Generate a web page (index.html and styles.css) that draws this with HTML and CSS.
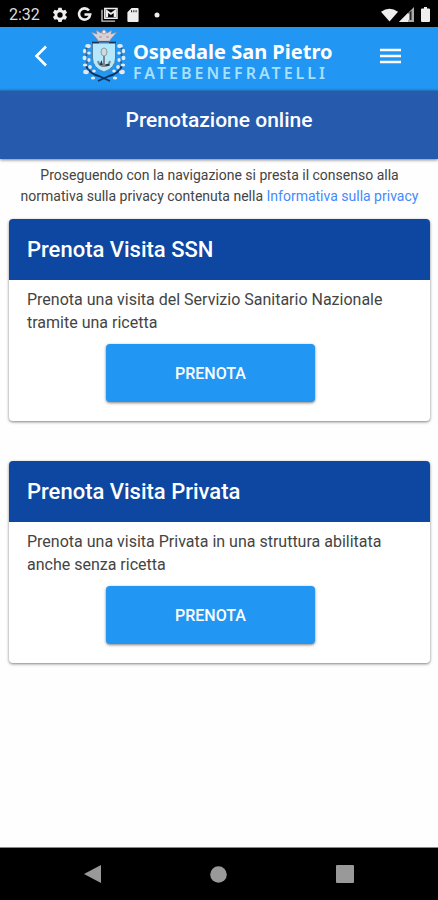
FILE: index.html
```html
<!DOCTYPE html>
<html lang="it">
<head>
    <meta charset="UTF-8">
    <meta name="viewport" content="width=device-width, initial-scale=1.0">
    <title>Prenotazione online</title>
    <link rel="stylesheet" href="styles.css">
</head>
<body>
    <div class="status-bar">
        <span class="time">2:32</span>
        <div class="status-icons">
            <!-- settings -->
            <svg width="16" height="16" viewBox="0 0 24 24"><path fill="#eee" fill-rule="evenodd" d="M9.5 1h5l.6 3.2 2 1.1 3-1.1 2.5 4.300-2.500 2.100v2.300l2.500 2.100-2.500 4.300-3-1.100-2 1.200-.6 3.200h-5l-.6-3.200-2-1.200-3 1.100-2.500-4.300 2.500-2.100v-2.300L1.400 8.500l2.500-4.300 3 1.100 2-1.100zM12 8a4 4 0 1 0 0 8 4 4 0 0 0 0-8z"/></svg>
            <!-- google -->
            <svg width="15" height="15" viewBox="0 0 15 15"><path fill="none" stroke="#eee" stroke-width="2.600" d="M12 3.500A5.600 5.600 0 1 0 13.200 7.500H7.500"/></svg>
            <!-- gallery with mail -->
            <svg width="17" height="15" viewBox="0 0 18 16"><path fill="none" stroke="#ccc" stroke-width="1.400" d="M1 3v12h14"/><path fill="none" stroke="#eee" stroke-width="1.600" d="M4 1.500h13v10.500H4z"/><path fill="#eee" d="M5 11V2l5.500 4L16 2v9h-2.500V6.500l-3 2-3-2V11z"/></svg>
            <!-- sd card -->
            <svg width="12" height="14" viewBox="0 0 12 15"><path fill="#eee" fill-rule="evenodd" d="M4.500 0H11a1 1 0 0 1 1 1v13a1 1 0 0 1-1 1H1a1 1 0 0 1-1-1V4.500zM4 2.500v2h1v-2zm2.400 0v2h1v-2zm2.400 0v2h1v-2z"/></svg>
            <svg class="dot" width="6" height="6" viewBox="0 0 6 6"><circle cx="3" cy="3" r="2.500" fill="#eee"/></svg>
        </div>
        <div class="signal-icons">
            <svg width="17" height="14" viewBox="0 0 18 14"><path fill="#eee" d="M0 3.500Q9-3 18 3.500L9 14z"/></svg>
            <svg width="15" height="15" viewBox="0 0 15 15"><path fill="#aaa" d="M0 15 15 0v15z"/><path fill="#eee" d="M0 15 9 6v9z"/><path fill="#222" d="M9 7l3.500-3.500V13H9z"/><path fill="#eee" d="M9 7l1.500-1v7H9z"/></svg>
            <svg class="battery" width="9" height="15" viewBox="0 0 9 15"><path fill="#eee" d="M3 0h3v1.500h2a1 1 0 0 1 1 1V14a1 1 0 0 1-1 1H1a1 1 0 0 1-1-1V2.500a1 1 0 0 1 1-1h2z"/></svg>
        </div>
    </div>

    <header class="navbar">
        <button class="icon-btn" aria-label="Indietro">
            <svg width="14" height="22" viewBox="0 0 14 22"><path fill="none" stroke="#fff" stroke-width="2.600" d="M12 1.500 2.500 11l9.500 9.500"/></svg>
        </button>
        <div class="brand">
            <svg width="44" height="56" viewBox="0 0 44 56">
                <!-- olive branches -->
                <g fill="none" stroke="#4c7fae" stroke-width="1">
                    <path d="M6 18Q2 28 6 40"/>
                    <path d="M38 18q4 10 0 22"/>
                </g>
                <g fill="none" stroke="#12305c" stroke-width="1.800">
                    <path d="M4 38q4 8 13 10l11 5"/>
                    <path d="M40 38q-4 8-13 10l-11 5"/>
                </g>
                <g fill="#dfeaf2">
                    <ellipse cx="6" cy="18" rx="2.800" ry="2"/><ellipse cx="2.500" cy="23" rx="1.600" ry="2.200"/><ellipse cx="7" cy="25" rx="1.800" ry="1.500"/>
                    <ellipse cx="2.500" cy="30" rx="2" ry="2.200"/><ellipse cx="7" cy="32" rx="1.600" ry="2"/><ellipse cx="3" cy="37" rx="2.200" ry="1.600"/>
                    <ellipse cx="8" cy="39" rx="1.800" ry="2"/><ellipse cx="4" cy="44" rx="2.800" ry="2.200"/><ellipse cx="12" cy="43" rx="1.800" ry="1.600"/><ellipse cx="11" cy="50" rx="2.200" ry="1.600"/>
                    <ellipse cx="38" cy="18" rx="2.800" ry="2"/><ellipse cx="41.500" cy="23" rx="1.600" ry="2.200"/><ellipse cx="37" cy="25" rx="1.800" ry="1.500"/>
                    <ellipse cx="41.500" cy="30" rx="2" ry="2.200"/><ellipse cx="37" cy="32" rx="1.600" ry="2"/><ellipse cx="41" cy="37" rx="2.200" ry="1.600"/>
                    <ellipse cx="36" cy="39" rx="1.800" ry="2"/><ellipse cx="40" cy="44" rx="2.800" ry="2.200"/><ellipse cx="32" cy="43" rx="1.800" ry="1.600"/><ellipse cx="33" cy="50" rx="2.200" ry="1.600"/>
                </g>
                <g fill="#3c5672">
                    <circle cx="4.500" cy="20.500" r="1"/><circle cx="4.500" cy="27" r="1"/><circle cx="5" cy="34.500" r="1"/><circle cx="6" cy="41.500" r="1"/>
                    <circle cx="39.500" cy="20.500" r="1"/><circle cx="39.500" cy="27" r="1"/><circle cx="39" cy="34.500" r="1"/><circle cx="38" cy="41.500" r="1"/>
                </g>
                <!-- shield with the anchor -->
                <path fill="#b5e8fa" stroke="#4f7da3" d="M10.500 15h23v15q0 10-11.500 14-11.500-4-11.500-14z"/>
                <path stroke="#1c3252" stroke-width="1.300" d="M10 14.500h7m10 0h7"/>
                <ellipse cx="22" cy="24" rx="3" ry="4" fill="#d3dade" stroke="#8b9ca8"/>
                <path fill="none" stroke="#7c868d" stroke-width="2" d="M22 28v9M16 33q1 5 6 5 5 0 6-5"/>
                <path fill="#303b46" d="m17.500 37 2-5 1.500 5zm6-1h4v2h-4z"/>
                <!-- crown -->
                <path fill="#d6d2d8" stroke="#7d8194" stroke-width=".6" d="m15 11-6-7 6 2-1-4 5 3 3-4 3 4 5-3-1 4 6-2-6 7-2 3H17z"/>
                <path stroke="#5b5561" stroke-width="1.200" d="M16.500 13.500h11"/>
                <path fill="none" stroke="#b98790" d="M17 9h3m4 0h3"/>
                <circle cx="22" cy="4" r="2" fill="#f2e8e8" stroke="#8d717b" stroke-width=".6"/>
            </svg>
            <div class="brand-text">
                <span class="brand-name">Ospedale San Pietro</span>
                <span class="brand-sub">FATEBENEFRATELLI</span>
            </div>
        </div>
        <button class="icon-btn" aria-label="Menu">
            <svg width="21" height="16" viewBox="0 0 21 16"><path stroke="#fff" stroke-width="2.600" d="M0 2h21M0 8h21M0 14h21"/></svg>
        </button>
    </header>

    <h1 class="page-title">Prenotazione online</h1>

    <main class="content">
        <p class="privacy">Proseguendo con la navigazione si presta il consenso alla normativa sulla privacy contenuta nella <a href="#">Informativa sulla privacy</a></p>

        <section class="card">
            <h2 class="card-title">Prenota Visita SSN</h2>
            <div class="card-body">
                <p>Prenota una visita del Servizio Sanitario Nazionale tramite una ricetta</p>
                <button class="book-btn">PRENOTA</button>
            </div>
        </section>

        <section class="card">
            <h2 class="card-title">Prenota Visita Privata</h2>
            <div class="card-body">
                <p>Prenota una visita Privata in una struttura abilitata anche senza ricetta</p>
                <button class="book-btn">PRENOTA</button>
            </div>
        </section>
    </main>

    <nav class="system-nav">
        <button class="icon-btn" aria-label="Back"><svg width="17" height="18" viewBox="0 0 17 18"><path fill="#999" d="M17 0v18L0 9z"/></svg></button>
        <button class="icon-btn" aria-label="Home"><svg width="17" height="17" viewBox="0 0 17 17"><circle cx="8.500" cy="8.500" r="8.300" fill="#999"/></svg></button>
        <button class="icon-btn" aria-label="Recent apps"><svg width="18" height="18" viewBox="0 0 18 18"><rect width="18" height="18" rx="1" fill="#999"/></svg></button>
    </nav>
</body>
</html>
```
FILE: styles.css
```css
* {
    box-sizing: border-box;
}
body {
    margin: 0;
    min-height: 100vh;
    display: flex;
    flex-direction: column;
    background: #fefefe;
    font-family: Roboto, sans-serif;
    color: #444;
}
button {
    border: none;
    font-family: inherit;
    cursor: pointer;
}
svg {
    display: block;
    flex-shrink: 0;
}
.status-bar {
    display: flex;
    align-items: center;
    height: 27px;
    padding: 2px 8px 0 9px;
    background: #000;
    color: #ddd;
}
.time {
    font-size: 16px;
}
.status-icons {
    display: flex;
    align-items: center;
    gap: 9px;
    margin-left: 12px;
}
.dot {
    margin-left: 6px;
}
.signal-icons {
    display: flex;
    align-items: center;
    gap: 1px;
    margin-left: auto;
}
.battery {
    margin-left: 6px;
}
.navbar {
    display: flex;
    align-items: center;
    height: 63px;
    padding: 0 29px 6px 26px;
    background: #2196f3;
}
.icon-btn {
    display: flex;
    justify-content: center;
    padding: 8px;
    background: none;
}
.brand {
    display: flex;
    align-items: center;
    gap: 7px;
    margin: 0 auto 0 26px;
}
.brand-text {
    display: flex;
    flex-direction: column;
    padding-top: 12px;
}
.brand-name {
    font-family: "Noto Sans", sans-serif;
    font-size: 20px;
    font-weight: 700;
    line-height: 23px;
    color: #fff;
}
.brand-sub {
    font-family: "Noto Sans", sans-serif;
    font-size: 16px;
    font-weight: 600;
    line-height: 20px;
    letter-spacing: 3px;
    color: #a6e0ff;
}
.page-title {
    margin: 0;
    height: 69px;
    padding-top: 16px;
    border-top: 1px solid #2373bd;
    background: #255aac;
    box-shadow: 0 1px 3px rgba(0, 0, 0, 0.5);
    font-size: 21px;
    font-weight: 500;
    line-height: 26px;
    text-align: center;
    color: #fff;
}
.content {
    flex: 1;
    padding: 6px 8px 0 9px;
}
.privacy {
    margin: 0 0 12px;
    font-size: 14px;
    line-height: 21px;
    text-align: center;
}
.privacy a {
    color: #448aff;
    text-decoration: none;
}
.card {
    margin-bottom: 40px;
    border-radius: 4px;
    overflow: hidden;
    background: #fff;
    box-shadow: 0 1px 3px rgba(0, 0, 0, 0.5);
}
.card-title {
    margin: 0;
    padding: 17px 18px;
    background: #0d47a1;
    font-size: 22px;
    font-weight: 500;
    line-height: 27px;
    color: #fff;
}
.card-body {
    padding: 8px 36px 19px 18px;
}
.card-body p {
    margin: 0 0 10px;
    font-size: 16px;
    line-height: 23px;
}
.book-btn {
    display: block;
    width: 57%;
    height: 58px;
    margin: 0 auto;
    border-radius: 4px;
    background: #2196f3;
    box-shadow: 0 1px 3px rgba(0, 0, 0, 0.5);
    font-size: 16px;
    font-weight: 500;
    color: #fff;
}
.system-nav {
    display: flex;
    justify-content: space-around;
    align-items: center;
    height: 53px;
    padding: 0 30px;
    border-top: 1px solid #888;
    background: #000;
}
```
